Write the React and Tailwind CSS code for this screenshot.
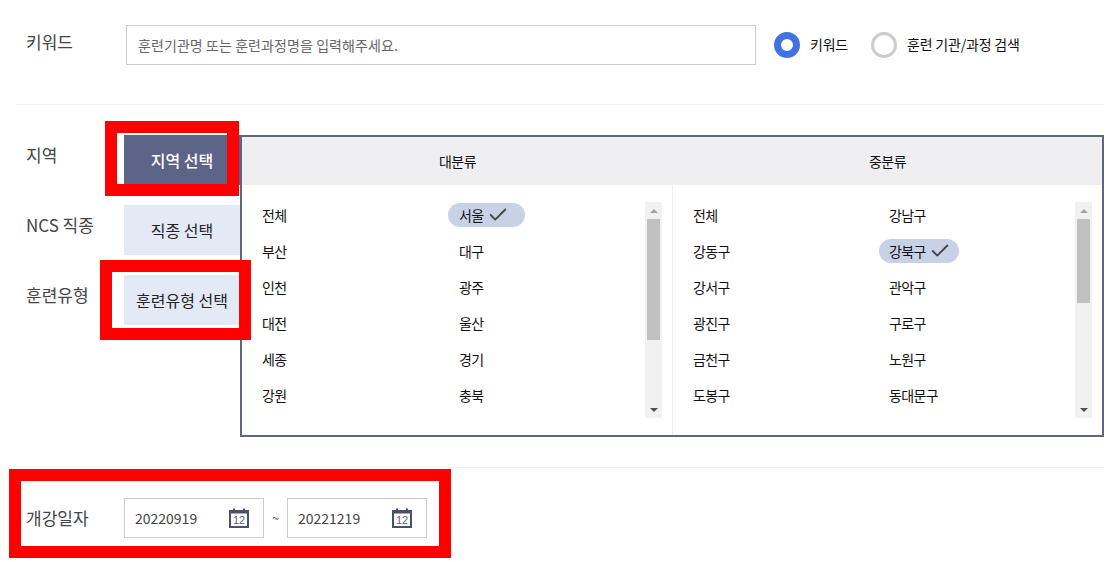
import { Check } from 'lucide-react';

const font = { fontFamily: '"Noto Sans CJK KR", "Noto Sans", sans-serif' };

const regionLeft = [
  ['전체', '서울'],
  ['부산', '대구'],
  ['인천', '광주'],
  ['대전', '울산'],
  ['세종', '경기'],
  ['강원', '충북'],
];

const regionRight = [
  ['전체', '강남구'],
  ['강동구', '강북구'],
  ['강서구', '관악구'],
  ['광진구', '구로구'],
  ['금천구', '노원구'],
  ['도봉구', '동대문구'],
];

const CalendarIcon = () => (
  <svg width="20" height="20" viewBox="0 0 20 20" className="shrink-0">
    <rect x="1" y="3" width="18" height="16" fill="none" stroke="#4a5268" strokeWidth="2" />
    <rect x="1" y="3" width="18" height="2.5" fill="#4a5268" />
    <rect x="4" y="0.5" width="2" height="3" fill="#4a5268" />
    <rect x="14" y="0.5" width="2" height="3" fill="#4a5268" />
    <text x="10" y="16" textAnchor="middle" fontSize="11" fill="#5c6478" fontFamily="Liberation Sans">12</text>
  </svg>
);

const Scrollbar = ({ thumb }) => (
  <div className="w-[17px] h-[216px] bg-[#f1f1f1] flex flex-col items-center shrink-0">
    <div className="h-[17px] flex items-center justify-center">
      <div className="w-0 h-0 border-x-[4px] border-x-transparent border-b-[4px] border-b-[#a3a3a3]" />
    </div>
    <div className="w-[13px] bg-[#c1c1c1]" style={{ height: thumb }} />
    <div className="flex-1" />
    <div className="h-[17px] flex items-center justify-center">
      <div className="w-0 h-0 border-x-[4px] border-x-transparent border-t-[4px] border-t-[#505050]" />
    </div>
  </div>
);

const Cell = ({ text, selected, pillClass }) => (
  <div className="h-[24px] flex items-center text-[14px] tracking-[-0.6px] text-[#111]">
    {selected ? (
      <span className={`h-[24px] rounded-full bg-[#c8d2e6] flex items-center gap-[3px] ${pillClass}`}>
        {text}
        <Check size={22} strokeWidth={2} className="text-[#444]" />
      </span>
    ) : (
      text
    )}
  </div>
);

const OptionList = ({ rows, selected, secondX, thumb, pillClass }) => (
  <div className="flex h-full pl-[20px] pr-[10px]">
    <div className="flex-1 pt-[18px] flex flex-col gap-[12px]">
      {rows.map((row) => (
        <div key={row[0]} className="flex">
          <div style={{ width: secondX }}>
            <Cell text={row[0]} />
          </div>
          <Cell text={row[1]} selected={row[1] === selected} pillClass={pillClass} />
        </div>
      ))}
    </div>
    <div className="pt-[17px]">
      <Scrollbar thumb={thumb} />
    </div>
  </div>
);

const FilterRow = ({ label, button, active }) => (
  <div className="flex h-[50px]">
    <div className="w-[98px] pt-[7px] text-[17px] text-[#444]">{label}</div>
    <div
      className={`w-[116px] flex items-center justify-center text-[16px] ${
        active ? 'bg-[#5c6488] text-white font-medium' : 'bg-[#e3eaf6] text-[#222]'
      }`}
    >
      {button}
    </div>
  </div>
);

const DateBox = ({ value }) => (
  <div className="w-[140px] h-[40px] border border-[#cccccc] flex items-center justify-between pl-[10px] pr-[14px] text-[14px] text-[#444]">
    {value}
    <CalendarIcon />
  </div>
);

const App = () => {
  return (
    <div className="relative w-[1118px] h-[562px] bg-white overflow-hidden" style={font}>
      <div className="pl-4 pr-[14px]">
        {/* keyword */}
        <div className="h-[105px] border-b border-[#f2f2f2] pt-[25px] flex">
          <div className="w-[110px] pl-[10px] pt-[4px] text-[17px] text-[#444]">키워드</div>
          <div className="w-[630px] h-[40px] border border-[#cccccc] flex items-center px-[11px] text-[14px] tracking-[0.08px] text-[#666]">
            훈련기관명 또는 훈련과정명을 입력해주세요.
          </div>
          <div className="h-[40px] -mt-[1px] flex items-center ml-[18px] text-[14px] tracking-[-0.2px] text-[#111]">
            <div className="w-[26px] h-[26px] mt-[2px] rounded-full border-[7px] border-[#4372e0]" />
            <span className="ml-[10px]">키워드</span>
            <div className="w-[26px] h-[26px] mt-[2px] rounded-full border-[3px] border-[#cccccc] ml-[23px]" />
            <span className="ml-[10px]">훈련 기관/과정 검색</span>
          </div>
        </div>

        {/* filters */}
        <div className="h-[363px] border-b border-[#f2f2f2] pt-[30px] flex">
          <div className="pl-[10px] w-[224px] shrink-0 flex flex-col gap-[20px]">
            <FilterRow label="지역" button="지역 선택" active />
            <FilterRow label="NCS 직종" button="직종 선택" />
            <FilterRow label="훈련유형" button="훈련유형 선택" />
          </div>
          <div className="w-[864px] h-[302px] border-2 border-[#5c6488] flex flex-col bg-white">
            <div className="h-[48px] bg-[#efeff2] flex items-center text-[14px] tracking-[-0.5px] text-[#111] shrink-0">
              <div className="w-[431px] text-center">대분류</div>
              <div className="flex-1 text-center">중분류</div>
            </div>
            <div className="flex flex-1">
              <div className="w-[431px] border-r border-[#eeeeee]">
                <OptionList
                  rows={regionLeft}
                  selected="서울"
                  secondX={197}
                  thumb={121}
                  pillClass="w-[77px] -ml-[11px] pl-[11px]"
                />
              </div>
              <div className="flex-1">
                <OptionList
                  rows={regionRight}
                  selected="강북구"
                  secondX={196}
                  thumb={84}
                  pillClass="w-[80px] -ml-[10px] pl-[10px]"
                />
              </div>
            </div>
          </div>
        </div>

        {/* dates */}
        <div className="pt-[30px] pl-[10px] flex items-center">
          <div className="w-[98px] text-[17px] text-[#444]">개강일자</div>
          <DateBox value="20220919" />
          <div className="w-[23px] text-center text-[13px] text-[#666]">~</div>
          <DateBox value="20221219" />
        </div>
      </div>

      {/* red annotation boxes */}
      <div className="absolute left-[105px] top-[121px] w-[134px] h-[75px] border-[12px] border-[#ff0000]" />
      <div className="absolute left-[100px] top-[260px] w-[151px] h-[80px] border-[12px] border-[#ff0000]" />
      <div className="absolute left-[9px] top-[469px] w-[442px] h-[89px] border-[12px] border-[#ff0000]" />
    </div>
  );
};

export default App;
